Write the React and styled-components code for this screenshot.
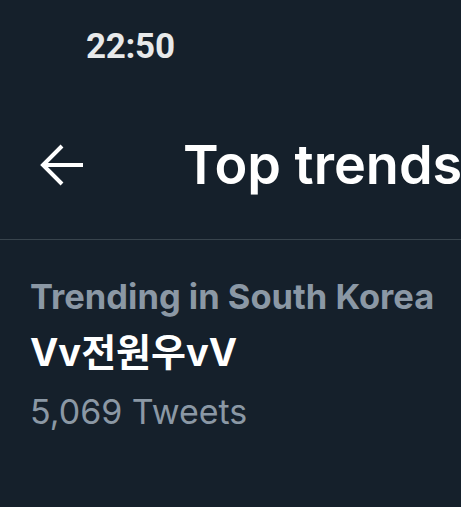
import React from "react";
import styled, { createGlobalStyle } from "styled-components";

const Global = createGlobalStyle`
  html, body { margin: 0; padding: 0; background: #15202b; }
  body { width: 461px; height: 507px; overflow: hidden; }
`;

const Screen = styled.div`
  width: 461px;
  height: 507px;
  background: #15202b;
  display: flex;
  flex-direction: column;
  overflow: hidden;
`;

const StatusBar = styled.div`
  height: 90px;
  display: flex;
  align-items: flex-start;
  padding: 27px 0 0 86px;
  box-sizing: border-box;
  font-family: Roboto, "Liberation Sans", sans-serif;
  font-weight: 700;
  font-size: 35px;
  line-height: 40px;
  color: #e7e9ea;
  letter-spacing: -0.3px;
`;

const Header = styled.div`
  height: 150px;
  display: flex;
  align-items: center;
  padding-left: 40px;
  box-sizing: border-box;
  border-bottom: 1px solid #38444d;
  white-space: nowrap;
`;

const BackButton = styled.div`
  width: 44px;
  height: 44px;
  display: flex;
  align-items: center;
  justify-content: center;
  margin-right: 99px;
  margin-top: 1px;
  flex-shrink: 0;
`;

const Title = styled.h1`
  margin: 0;
  font-family: Inter, "Noto Sans", sans-serif;
  font-weight: 600;
  font-size: 54px;
  line-height: 60px;
  color: #ffffff;
`;

const TrendItem = styled.div`
  padding: 35px 0 0 30px;
  display: flex;
  flex-direction: column;
`;

const Context = styled.div`
  font-family: Inter, "Noto Sans", sans-serif;
  font-weight: 700;
  font-size: 34.5px;
  line-height: 44px;
  color: #8b98a5;
`;

const TrendName = styled.div`
  margin-top: 5px;
  font-family: Inter, "Noto Sans CJK KR", sans-serif;
  font-weight: 700;
  font-size: 38px;
  line-height: 56px;
  color: #ffffff;
`;

const Count = styled.div`
  margin-top: 10px;
  font-family: Inter, "Noto Sans", sans-serif;
  font-weight: 400;
  font-size: 34px;
  line-height: 44px;
  color: #8b98a5;
`;

export default function App() {
  return (
    <>
      <Global />
      <Screen>
        <StatusBar>22:50</StatusBar>
        <Header>
          <BackButton>
            <svg width="44" height="44" viewBox="0 0 44 44" fill="none">
              <path d="M43 22H4M22 3L3 22l19 19" stroke="#fff" strokeWidth="4" />
            </svg>
          </BackButton>
          <Title>Top trends</Title>
        </Header>
        <TrendItem>
          <Context>Trending in South Korea</Context>
          <TrendName>Vv전원우vV</TrendName>
          <Count>5,069 Tweets</Count>
        </TrendItem>
      </Screen>
    </>
  );
}
